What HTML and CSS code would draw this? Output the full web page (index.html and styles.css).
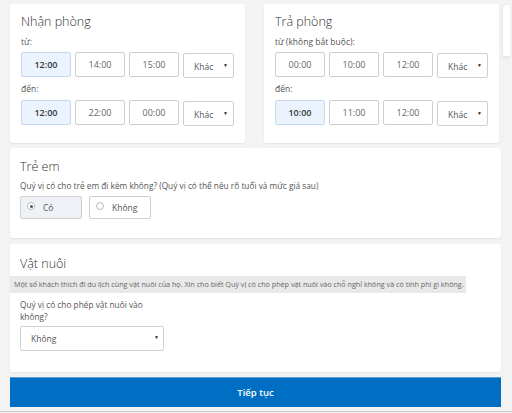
FILE: index.html
```html
<!DOCTYPE html>
<html lang="vi">
<head>
<meta charset="utf-8">
<link rel="stylesheet" href="styles.css">
</head>
<body>
<div class="page">
  <div class="top-row">
    <section class="card time-card left">
      <h2 class="title">Nhận phòng</h2>
      <div class="label">từ:</div>
      <div class="times">
        <div class="tbtn sel">12:00</div>
        <div class="tbtn">14:00</div>
        <div class="tbtn">15:00</div>
        <div class="tsel"><span>Khác</span><span class="arrow">▼</span></div>
      </div>
      <div class="label">đến:</div>
      <div class="times">
        <div class="tbtn sel">12:00</div>
        <div class="tbtn">22:00</div>
        <div class="tbtn">00:00</div>
        <div class="tsel"><span>Khác</span><span class="arrow">▼</span></div>
      </div>
    </section>
    <section class="card time-card right">
      <h2 class="title">Trả phòng</h2>
      <div class="label">từ (không bắt buộc):</div>
      <div class="times">
        <div class="tbtn">00:00</div>
        <div class="tbtn">10:00</div>
        <div class="tbtn">12:00</div>
        <div class="tsel"><span>Khác</span><span class="arrow">▼</span></div>
      </div>
      <div class="label">đến:</div>
      <div class="times">
        <div class="tbtn sel">10:00</div>
        <div class="tbtn">11:00</div>
        <div class="tbtn">12:00</div>
        <div class="tsel"><span>Khác</span><span class="arrow">▼</span></div>
      </div>
    </section>
    <div class="card peek"></div>
  </div>

  <section class="card kids">
    <h2 class="title">Trẻ em</h2>
    <div class="question">Quý vị có cho trẻ em đi kèm không? (Quý vị có thể nêu rõ tuổi và mức giá sau)</div>
    <div class="radios">
      <div class="radio checked"><span class="dot"></span><span>Có</span></div>
      <div class="radio"><span class="dot"></span><span>Không</span></div>
    </div>
  </section>

  <section class="card pets">
    <h2 class="title">Vật nuôi</h2>
    <div class="note">Một số khách thích đi du lịch cùng vật nuôi của họ. Xin cho biết Quý vị có cho phép vật nuôi vào chỗ nghỉ không và có tính phí gì không.</div>
    <div class="question narrow">Quý vị có cho phép vật nuôi vào không?</div>
    <div class="bigsel"><span>Không</span><span class="arrow">▼</span></div>
  </section>

  <div class="continue">Tiếp tục</div>
</div>
<div class="footline"></div>
</body>
</html>
```
FILE: styles.css
```css
html, body {
  margin: 0;
  padding: 0;
}
body {
  background: #f3f3f3;
  font-family: "Open Sans", "Noto Sans", sans-serif;
  color: #444;
  width: 512px;
  height: 413px;
  overflow: hidden;
}
.page {
  padding: 4px 11px 0 10px;
  display: flex;
  flex-direction: column;
}
.card {
  background: #fff;
  border-radius: 3px;
  box-shadow: 0 1px 2px rgba(0, 0, 0, 0.07);
  box-sizing: border-box;
}
.top-row {
  display: flex;
  align-items: flex-start;
  width: 491px;
}
.time-card {
  height: 139px;
  padding: 9px 11px 0 11px;
}
.time-card.left {
  width: 235px;
}
.time-card.right {
  width: 237px;
  margin-left: 19px;
}
.peek {
  flex: none;
  width: 8px;
  height: 53px;
  margin-left: 3px;
  border: 1px solid #e4ecf7;
  border-right: none;
  border-radius: 3px 0 0 3px;
}
.title {
  margin: 0;
  font-size: 12.5px;
  line-height: 18px;
  font-weight: 300;
  color: #333;
}
.label {
  font-size: 8.5px;
  line-height: 12px;
  color: #555;
  margin-top: 5px;
}
.times {
  display: flex;
  gap: 4px;
  margin-top: 4px;
}
.times + .label {
  margin-top: 5px;
}
.times:last-child {
  margin-top: 5px;
}
.tbtn {
  width: 50px;
  height: 25px;
  box-sizing: border-box;
  border: 1px solid #cfcfcf;
  border-radius: 2px;
  display: flex;
  align-items: center;
  justify-content: center;
  font-size: 9px;
  color: #666;
  background: #fff;
}
.tbtn.sel {
  background: #ebf3fe;
  border-color: #c6d9f0;
  color: #333;
  font-weight: 600;
}
.tsel {
  width: 51px;
  height: 25px;
  margin-top: 1px;
  box-sizing: border-box;
  border: 1px solid #cfcfcf;
  border-radius: 2px;
  display: flex;
  align-items: center;
  justify-content: space-between;
  padding: 2px 5px 0 10px;
  font-size: 8.5px;
  color: #555;
}
.arrow {
  font-size: 5px;
  color: #222;
  margin-top: -3px;
}
.kids {
  margin-top: 5px;
  height: 90px;
  padding: 10px 10px 0 10px;
}
.question {
  font-size: 8.3px;
  line-height: 12px;
  color: #555;
  margin-top: 4px;
}
.radios {
  display: flex;
  gap: 7px;
  margin-top: 4px;
}
.radio {
  width: 62px;
  height: 23px;
  box-sizing: border-box;
  border: 1px solid #cfcfcf;
  border-radius: 2px;
  display: flex;
  align-items: center;
  padding-left: 6px;
  gap: 8px;
  font-size: 8.5px;
  color: #555;
  background: #fff;
}
.radio.checked {
  background: #eef1f5;
}
.dot {
  width: 6px;
  height: 6px;
  border: 1px solid #bbb;
  border-radius: 50%;
  background: #fff;
  position: relative;
  margin-top: -3px;
}
.radio.checked .dot::after {
  content: "";
  position: absolute;
  left: 1.5px;
  top: 1.5px;
  width: 3px;
  height: 3px;
  border-radius: 50%;
  background: #555;
}
.pets {
  margin-top: 6px;
  height: 128px;
  padding: 11px 10px 0 0;
}
.pets .title {
  padding-left: 10px;
}
.note {
  margin-top: 3px;
  width: 456px;
  height: 17px;
  background: #e9e9e9;
  font-size: 7.2px;
  line-height: 17px;
  color: #666;
  padding-left: 4px;
  box-sizing: border-box;
  white-space: nowrap;
  overflow: hidden;
}
.question.narrow {
  margin-top: 6px;
  margin-left: 10px;
  width: 150px;
}
.bigsel {
  margin-top: 3px;
  margin-left: 10px;
  width: 144px;
  height: 25px;
  box-sizing: border-box;
  border: 1px solid #cfcfcf;
  border-radius: 2px;
  display: flex;
  align-items: center;
  justify-content: space-between;
  padding: 0 4px 0 10px;
  font-size: 8.5px;
  color: #555;
}
.continue {
  margin-top: 5px;
  height: 30px;
  background: #006fc3;
  border-top: 1px solid #5a9ad6;
  box-sizing: border-box;
  color: #fff;
  font-size: 9.5px;
  font-weight: 600;
  display: flex;
  align-items: center;
  justify-content: center;
}
.footline {
  margin-top: 4px;
  height: 1px;
  background: #c9c9c9;
}
```
